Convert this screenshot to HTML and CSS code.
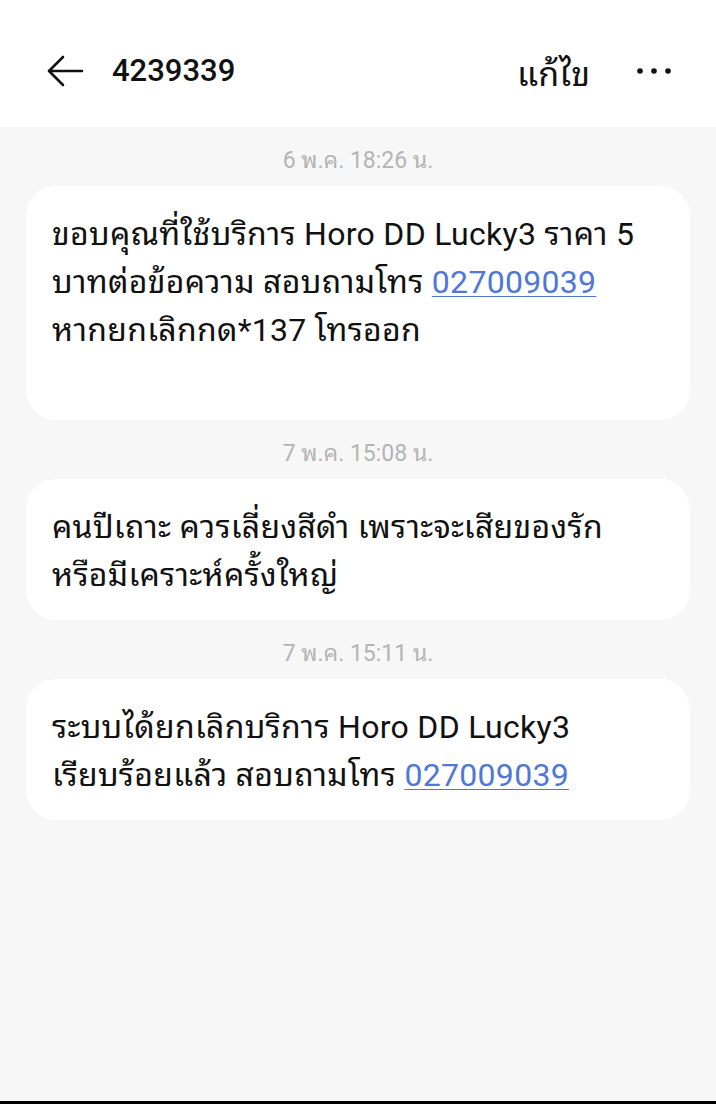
FILE: index.html
```html
<!DOCTYPE html>
<html lang="th">
<head>
<meta charset="utf-8">
<title>4239339</title>
<link rel="stylesheet" href="styles.css">
</head>
<body>
<div class="screen">
  <header class="topbar">
    <svg class="back" width="38" height="32" viewBox="0 0 38 32" aria-hidden="true">
      <path d="M36 16H3M17 2L3 16l14 14" fill="none" stroke="#111" stroke-width="2.6" stroke-linecap="round" stroke-linejoin="round"/>
    </svg>
    <h1 class="title">4239339</h1>
    <span class="edit">แก้ไข</span>
    <svg class="more" width="36" height="8" viewBox="0 0 36 8" aria-hidden="true">
      <circle cx="4" cy="4" r="2.8" fill="#111"/>
      <circle cx="18" cy="4" r="2.8" fill="#111"/>
      <circle cx="32" cy="4" r="2.8" fill="#111"/>
    </svg>
  </header>
  <main class="thread">
    <div class="stamp">6 พ.ค. 18:26 น.</div>
    <div class="bubble bubble-tall">ขอบคุณที่ใช้บริการ Horo DD Lucky3 ราคา 5<br>บาทต่อข้อความ สอบถามโทร <a class="link" href="#">027009039</a><br>หากยกเลิกกด*137 โทรออก</div>
    <div class="stamp">7 พ.ค. 15:08 น.</div>
    <div class="bubble">คนปีเถาะ ควรเลี่ยงสีดำ เพราะจะเสียของรัก<br>หรือมีเคราะห์ครั้งใหญ่</div>
    <div class="stamp">7 พ.ค. 15:11 น.</div>
    <div class="bubble">ระบบได้ยกเลิกบริการ Horo DD Lucky3<br>เรียบร้อยแล้ว สอบถามโทร <a class="link" href="#">027009039</a></div>
  </main>
  <div class="bottomline"></div>
</div>
</body>
</html>
```

FILE: styles.css
```css
* { box-sizing: border-box; }
html, body { margin: 0; padding: 0; }
body {
  background: #f7f7f7;
  font-family: Roboto, "Noto Sans Thai Looped", "Noto Sans Thai", "Noto Sans", sans-serif;
  color: #111;
}
.screen {
  height: 1104px;
  display: flex;
  flex-direction: column;
}
.topbar {
  height: 127px;
  background: #fff;
  display: flex;
  align-items: center;
  padding: 14px 44px 0 46px;
  flex-shrink: 0;
}
.back { margin-right: 28px; }
.title {
  margin: 0;
  font-size: 31px;
  font-weight: 500;
  flex: 1;
}
.edit {
  font-size: 34px;
  margin-right: 46px;
}
.thread {
  flex: 1;
  padding: 0 26px;
}
.stamp {
  height: 59px;
  display: flex;
  align-items: center;
  justify-content: center;
  font-size: 23px;
  color: #b4b4b4;
  padding-top: 1px;
}
.bubble {
  background: #fff;
  border-radius: 30px;
  padding: 24px 20px 21px 26px;
  font-size: 32px;
  line-height: 48px;
  letter-spacing: 0.3px;
  color: #111;
  white-space: nowrap;
}
.bubble-tall { padding-bottom: 66px; }
.link {
  color: #4f77d6;
  text-decoration: underline;
  text-underline-offset: 3px;
  text-decoration-thickness: 1px;
}
.bottomline {
  height: 3px;
  background: #000;
  flex-shrink: 0;
}
```
